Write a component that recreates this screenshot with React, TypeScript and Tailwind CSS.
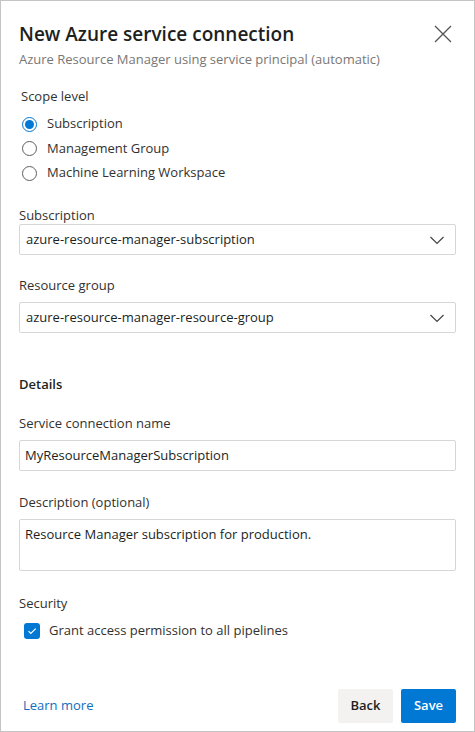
import { useState } from 'react';

const ChevronDown = () => (
  <svg width="16" height="16" viewBox="0 0 16 16" fill="none">
    <path d="M1.5 5l6.5 6.5L14.5 5" stroke="#444" strokeWidth="1.2" />
  </svg>
);

const Dropdown = ({ value }: { value: string }) => (
  <div className="flex items-center justify-between h-[31px] border border-[#d6d6d6] rounded-[2px] pl-[6px] pr-[10px] text-[13px] text-[#201f1e]">
    <span>{value}</span>
    <ChevronDown />
  </div>
);

const Label = ({ children }: { children: React.ReactNode }) => (
  <div className="text-[13px] text-[#323130] leading-[20px]">{children}</div>
);

const App = () => {
  const [scope, setScope] = useState('Subscription');
  const [grant, setGrant] = useState(true);
  const scopes = ['Subscription', 'Management Group', 'Machine Learning Workspace'];

  return (
    <div
      className="w-[475px] h-[732px] bg-white border border-[#c4c4c4] flex flex-col text-[#323130]"
      style={{ fontFamily: '"Open Sans", "Noto Sans", sans-serif' }}
    >
      <div className="flex items-start justify-between pl-[18px] pr-[22px] pt-[20px]">
        <div>
          <h2 className="text-[19px] font-semibold leading-[26px] text-[#201f1e]">New Azure service connection</h2>
          <p className="text-[13px] text-[#797775] leading-[20px] mt-[2px]">
            Azure Resource Manager using service principal (automatic)
          </p>
        </div>
        <button className="mt-[4px]">
          <svg width="18" height="18" viewBox="0 0 18 18" fill="none">
            <path d="M1 1l16 16M17 1L1 17" stroke="#555" strokeWidth="1.3" />
          </svg>
        </button>
      </div>

      <div className="px-[18px] flex flex-col">
        <div className="mt-[17px] pl-[2px]">
          <Label>Scope level</Label>
        </div>
        <div className="flex flex-col mt-[8px] gap-[4.5px] pl-[3px]">
          {scopes.map((s) => (
            <label key={s} className="flex items-center gap-[10px] h-[20px] text-[13px] cursor-pointer" onClick={() => setScope(s)}>
              {scope === s ? (
                <span className="w-[15px] h-[15px] rounded-full border-[1.5px] border-[#0078d4] flex items-center justify-center">
                  <span className="w-[9px] h-[9px] rounded-full bg-[#0078d4]" />
                </span>
              ) : (
                <span className="w-[15px] h-[15px] rounded-full border border-[#605e5c]" />
              )}
              <span className="text-[#323130]">{s}</span>
            </label>
          ))}
        </div>

        <div className="mt-[22px]">
          <Label>Subscription</Label>
          <div className="-mt-[1px]">
            <Dropdown value="azure-resource-manager-subscription" />
          </div>
        </div>

        <div className="mt-[20px]">
          <Label>Resource group</Label>
          <div className="mt-[7px]">
            <Dropdown value="azure-resource-manager-resource-group" />
          </div>
        </div>

        <div className="mt-[41px] text-[13px] leading-[20px] font-semibold text-[#201f1e]">Details</div>

        <div className="mt-[19px]">
          <Label>Service connection name</Label>
          <div className="mt-[7px] h-[31px] border border-[#d6d6d6] rounded-[2px] px-[5px] flex items-center text-[13px] text-[#201f1e]">
            MyResourceManagerSubscription
          </div>
        </div>

        <div className="mt-[21px]">
          <Label>Description (optional)</Label>
          <div className="mt-[7px] h-[52px] border border-[#d6d6d6] rounded-[2px] px-[5px] pt-[5px] text-[13px] text-[#201f1e]">
            Resource Manager subscription for production.
          </div>
        </div>

        <div className="mt-[22px]">
          <Label>Security</Label>
          <label className="flex items-center gap-[9px] mt-[8px] pl-[5px] cursor-pointer" onClick={() => setGrant(!grant)}>
            <span className={`w-[16px] h-[16px] rounded-[3px] flex items-center justify-center ${grant ? 'bg-[#0078d4]' : 'border border-[#605e5c]'}`}>
              {grant && (
                <svg width="10" height="10" viewBox="0 0 10 10" fill="none">
                  <path d="M1.5 5.2l2.3 2.3L8.7 2.6" stroke="white" strokeWidth="1.2" />
                </svg>
              )}
            </span>
            <span className="text-[13px] text-[#323130]">Grant access permission to all pipelines</span>
          </label>
        </div>
      </div>

      <div className="mt-auto flex items-center justify-between pl-[22px] pr-[18px] pb-[8px]">
        <a className="text-[13px] text-[#106ebe] cursor-pointer">Learn more</a>
        <div className="flex gap-[8px]">
          <button className="h-[34px] w-[55px] bg-[#f3f2f1] rounded-[2px] text-[13px] font-semibold text-[#201f1e]">Back</button>
          <button className="h-[34px] w-[55px] bg-[#0078d4] rounded-[2px] text-[13px] font-semibold text-white">Save</button>
        </div>
      </div>
    </div>
  );
};

export default App;
